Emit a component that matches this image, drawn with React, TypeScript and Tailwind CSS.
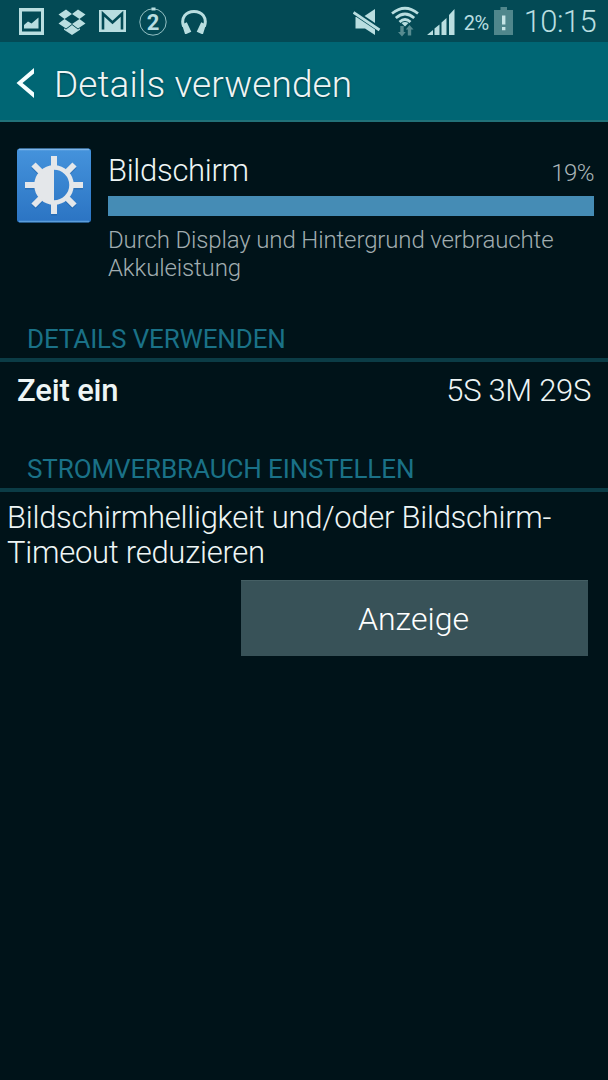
// App.tsx
import type { ReactNode } from 'react';

function StatusBar() {
  return (
    <div className="flex h-[42px] items-center justify-between bg-[#034a55] pl-[19px] pr-[12px] text-[#b9dee0]">
      {/* notifications */}
      <div className="flex items-center">
        <svg width="25" height="28" viewBox="0 0 25 28" className="mt-[1px]">
          <path fill="currentColor" fillRule="evenodd" d="M0 0h25v27H0zM3 3.500v20h19v-20z" />
          <path fill="currentColor" d="M5 20.500V17l4-3.500 3.500 2 7-6v11z" />
        </svg>
        <svg width="28" height="28" viewBox="0 0 28 28" className="ml-[14px]" fill="currentColor">
          <path d="M8 2.500L14 7 6.500 12 .5 7.500zM20 2.500l7.500 5L21.500 12 14 7zM6.500 12l7.500 5-6 4.500-7.500-5zM21.500 12l6 4.500-7.500 5-6-4.500z" />
          <path d="M14 18l6 4.500 2-1.200v1.400L14 28l-8-5.300v-1.400l2 1.200z" />
        </svg>
        <svg width="27" height="22" viewBox="0 0 27 22" className="ml-[13px]">
          <path fill="currentColor" d="M0 0h27v22H0z" />
          <path fill="none" stroke="#034a55" strokeWidth="2.600" d="M4 19.500V3.800l9.500 8.700L23 3.800v15.700" />
        </svg>
        <svg width="28" height="30" viewBox="0 0 28 30" className="ml-[13px]">
          <circle cx="14" cy="16" r="13.200" fill="none" stroke="currentColor" strokeWidth="0.800" />
          <path fill="currentColor" d="M12.500 1.500h4v3h-4z" />
          <text x="14" y="23.500" textAnchor="middle" fontSize="22" fontWeight="700" fill="currentColor">2</text>
        </svg>
        <svg width="26" height="26" viewBox="0 0 26 26" className="ml-[14px] mt-[2px]">
          <path fill="none" stroke="currentColor" strokeWidth="3" d="M2.600 17.500C-.5 8.500 5 2.500 13 2.500s13.500 6 10.400 15" />
          <path fill="currentColor" d="M1 15.500l4.800-2.200 4.500 9.400-5 2.300H4zM25 15.500l-4.800-2.200-4.500 9.400 5 2.300H22z" />
        </svg>
      </div>

      {/* system icons */}
      <div className="flex items-center">
        <svg width="28" height="28" viewBox="0 0 28 28" className="mt-[2px]">
          <path fill="currentColor" d="M2.500 9h7.500L22 1v26l-10-6.500H2.500z" />
          <path stroke="#034a55" strokeWidth="5.400" d="M0 3.500L27 21.500" />
          <path stroke="currentColor" strokeWidth="2.800" d="M.500 4.500L26.500 22" />
        </svg>
        <svg width="28" height="31" viewBox="0 0 28 31" className="ml-[10px]">
          <path fill="none" stroke="currentColor" strokeWidth="2.700" d="M1 7.500Q14-3 27 7.500M4.800 12Q14 4 23.200 12M8.500 16Q14 11 19.500 16" />
          <path fill="currentColor" d="M10.500 17q3.500-2 7 0L14 20.500z" />
          <path fill="#578b90" d="M9.300 20h3.400v6h2L11 30.500 7 26h2.300zM16.800 29.500v-6h-2L18.500 19l4 4.500h-2.300v6z" />
        </svg>
        <svg width="28" height="28" viewBox="0 0 28 28" className="ml-[8px] mt-[1px]" fill="currentColor">
          <path d="M0 27l6-5v5zM7.500 20.500l5-4V27h-5zM14.500 14.500l5-4.500v17h-5zM22 7l5.500-6v26H22z" />
        </svg>
        <span className="ml-[9px] mt-[3px] w-[25px] whitespace-nowrap text-[20px] leading-6 tracking-[-0.500px]">2%</span>
        <svg width="19" height="28" viewBox="0 0 19 28" className="ml-[5px]">
          <path fill="#50878c" d="M6.500 0h6.500v3h6v25H0V3h6.500z" />
          <path fill="#c5e4e5" d="M8 8.500h3.400v9H8zM8 20h3.400v3.200H8z" />
        </svg>
        <span className="ml-[11px] mt-[1px] whitespace-nowrap text-[31px] font-light leading-[42px] tracking-[-0.600px]">10:15</span>
      </div>
    </div>
  );
}

function SectionTitle({ children }: { children: ReactNode }) {
  return (
    <h2 className="h-[40px] whitespace-nowrap border-b-4 border-[#0b3c46] pl-[27px] text-[26px] leading-[34px] tracking-[-0.110px] text-[#1a7187]">
      {children}
    </h2>
  );
}

function BrightnessIcon() {
  return (
    <svg width="74" height="75" viewBox="0 -0.5 74 75" className="shrink-0">
      <defs>
        <linearGradient id="tile" x1="0" y1="0" x2="0" y2="1">
          <stop offset="0" stopColor="#4593dc" />
          <stop offset="1" stopColor="#2b74c3" />
        </linearGradient>
      </defs>
      <rect width="74" height="74" rx="3" fill="url(#tile)" />
      <path d="M2 1h70" stroke="#7db4e8" strokeWidth="1.500" />
      <path d="M2 73h70" stroke="#5b9edb" strokeWidth="1.500" />
      <g transform="translate(37 38)" stroke="#1d5d9f" strokeWidth="6" opacity="0.450">
        <path d="M0-29v10M0 19v10M-29 0h10M19 0h10M-20.500-20.500l7 7M13.500 13.500l7 7M20.500-20.500l-7 7M-13.500 13.500l-7 7" />
      </g>
      <g transform="translate(37 36.500)" stroke="#e4e7ea" strokeWidth="6">
        <path d="M0-29v10M0 19v10M-29 0h10M19 0h10M-20.500-20.500l7 7M13.500 13.500l7 7M20.500-20.500l-7 7M-13.500 13.500l-7 7" />
        <circle r="17.500" fill="none" strokeWidth="4.500" />
        <path d="M0-17a17 17 0 0 0 0 34z" fill="#e4e7ea" stroke="none" />
      </g>
    </svg>
  );
}

export default function App() {
  return (
    <div className="h-[1080px] w-[608px] overflow-hidden bg-[#001319] font-['Roboto',sans-serif] text-[#eef5f5]">
      <StatusBar />

      <header className="flex h-[80px] items-center border-b-2 border-[#217178] bg-[#006674] pl-[16px] pt-[7px]">
        <svg width="19" height="32" viewBox="0 0 19 32" className="mb-[3px]">
          <path d="M18 1v5.500L6.500 16 18 25.500V31L.5 16z" fill="#f4ffff" />
        </svg>
        <h1 className="ml-[19px] mt-px whitespace-nowrap text-[37px] font-light leading-[44px] tracking-[0.110px] [text-shadow:0_1px_2px_#003c46]">
          Details verwenden
        </h1>
      </header>

      <section className="flex pl-[16.500px] pr-[14px] pt-[26px]">
        <BrightnessIcon />
        <div className="ml-[17.500px] flex-1">
          <div className="flex h-[48px] items-start justify-between whitespace-nowrap font-light">
            <span className="text-[31px] leading-[46px] tracking-[-0.300px]">Bildschirm</span>
            <span className="pt-[3px] text-[24px] leading-[44px] tracking-[-0.500px] text-[#aab5b8]">19%</span>
          </div>
          <div className="h-[20px] bg-[#458cb5]" />
          <p className="mt-[11px] text-[24px] font-light leading-[27.500px] tracking-[-0.130px] text-[#a1adb0]">
            Durch Display und Hintergrund verbrauchte
            <br />
            Akkuleistung
          </p>
        </div>
      </section>

      <div className="mt-[40px]">
        <SectionTitle>DETAILS VERWENDEN</SectionTitle>
        <div className="flex h-[90px] justify-between whitespace-nowrap pl-[17px] pr-[17px] leading-[58px]">
          <span className="text-[31px] font-medium tracking-[-0.150px]">Zeit ein</span>
          <span className="text-[31px] font-light tracking-[-0.300px]">5S 3M 29S</span>
        </div>
      </div>

      <SectionTitle>STROMVERBRAUCH EINSTELLEN</SectionTitle>
      <p className="whitespace-nowrap pl-[7px] pt-[8px] text-[31px] font-light leading-[35px] tracking-[-0.270px]">
        Bildschirmhelligkeit und/oder Bildschirm-
        <br />
        Timeout reduzieren
      </p>
      <button className="ml-[241px] mt-[10px] block h-[76px] w-[347px] border-t border-[#455f64] bg-[#385258] pr-[2px] pt-px text-[32px] font-light text-white">
        Anzeige
      </button>
    </div>
  );
}
